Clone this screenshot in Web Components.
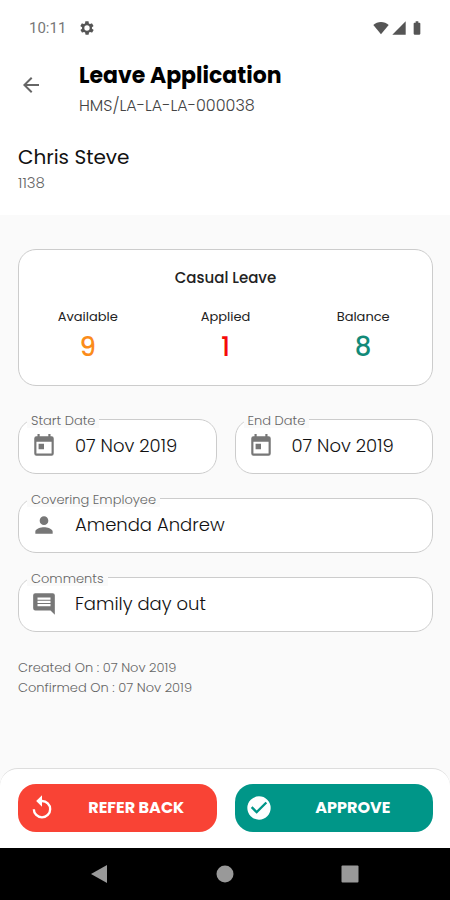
<!DOCTYPE html>
<html lang="en">
<head>
<meta charset="utf-8">
<meta name="viewport" content="width=device-width, initial-scale=1">
<title>Leave Application</title>
<style>
  html, body { margin: 0; }
  body { font-family: Poppins, Inter, "Open Sans", sans-serif; background: #fafafa; color: #111; }
</style>
</head>
<body>
<leave-app></leave-app>
<script>
const ICONS = {
  gear: '<path fill-rule="evenodd" d="M19.4 13a7.6 7.6 0 0 0 0-2l2.1-1.6c.2-.2.2-.4.1-.6l-2-3.5c-.1-.2-.4-.3-.6-.2l-2.500 1c-.5-.4-1.100-.7-1.700-1l-.4-2.600c0-.3-.2-.5-.5-.5h-4c-.3 0-.5.2-.5.5l-.4 2.600c-.6.3-1.200.6-1.700 1l-2.500-1c-.2-.1-.5 0-.6.2l-2 3.500c-.1.2-.1.5.1.600L4.600 11a7.600 7.600 0 0 0 0 2l-2.100 1.600c-.2.2-.2.4-.1.600l2 3.500c.1.2.4.3.6.2l2.500-1c.5.4 1.100.7 1.700 1l.4 2.600c0 .3.2.5.5.5h4c.3 0 .5-.2.5-.5l.4-2.600c.6-.3 1.200-.6 1.700-1l2.500 1c.2.1.5 0 .6-.2l2-3.500c.1-.2.1-.5-.1-.600zM12 16a4 4 0 1 1 0-8 4 4 0 0 1 0 8z"/>',
  wifi: '<path d="M.5 7.500C3.500 4.500 7.600 3 12 3s8.500 1.500 11.500 4.500L12 21.500z"/>',
  signal: '<path d="M2 22h20V2z"/>',
  battery: '<path d="M15.700 4H14V2h-4v2H8.300C7.600 4 7 4.600 7 5.300v15.400c0 .7.6 1.300 1.300 1.300h7.400c.7 0 1.300-.6 1.300-1.300V5.300c0-.7-.6-1.300-1.300-1.300z"/>',
  back: '<path d="M20 11H7.830l5.590-5.590L12 4l-8 8 8 8 1.410-1.410L7.830 13H20z"/>',
  event: '<path d="M19 3h-1V1h-2v2H8V1H6v2H5a2 2 0 0 0-2 2v14a2 2 0 0 0 2 2h14a2 2 0 0 0 2-2V5a2 2 0 0 0-2-2zm0 16H5V8h14zM7 10h5v5H7z"/>',
  person: '<path d="M12 12a4 4 0 1 0 0-8 4 4 0 0 0 0 8zm0 2c-2.670 0-8 1.340-8 4v2h16v-2c0-2.660-5.330-4-8-4z"/>',
  comment: '<path d="M22 4a2 2 0 0 0-2-2H4a2 2 0 0 0-2 2v12a2 2 0 0 0 2 2h14l4 4zm-4 10H6v-2h12zm0-3H6V9h12zm0-3H6V6h12z"/>',
  replay: '<path d="M12 5V1L7 6l5 5V7a6 6 0 1 1-6 6H4a8 8 0 1 0 8-8z"/>',
  check: '<path d="M12 2a10 10 0 1 0 0 20 10 10 0 0 0 0-20zm-2 15l-5-5 1.410-1.410L10 14.170l7.590-7.590L19 8z"/>',
  navback: '<path d="M3 12L19 3v18z"/>',
  home: '<circle cx="12" cy="12" r="8.500"/>',
  recent: '<rect x="3.500" y="3.500" width="17" height="17" rx="1"/>'
};

function define(name, render) {
  customElements.define(name, class extends HTMLElement {
    constructor() { super(); this.attachShadow({ mode: "open" }); }
    connectedCallback() { this.shadowRoot.innerHTML = render(this); }
  });
}
const attr = (el, name) => el.getAttribute(name) || "";

define("app-icon", el => `
  <style>
    :host { display: block; flex: none; width: var(--size, 24px); height: var(--size, 24px); }
    svg { display: block; width: 100%; height: 100%; fill: currentColor; }
  </style>
  <svg viewBox="0 0 24 24" aria-hidden="true">${ICONS[attr(el, "name")]}</svg>`);

define("status-bar", () => `
  <style>
    :host { display: flex; align-items: center; gap: 13px; height: 56px; padding: 0 25px 0 29px;
            background: #fff; color: #555; font: 15px Roboto, sans-serif; --size: 16px; }
    .time { color: #777; }
    .right { display: flex; align-items: center; gap: 2px; margin-left: auto; }
  </style>
  <span class="time">10:11</span><app-icon name="gear"></app-icon>
  <div class="right">
    <app-icon name="wifi"></app-icon><app-icon name="signal"></app-icon><app-icon name="battery"></app-icon>
  </div>`);

define("page-header", () => `
  <style>
    :host { display: block; background: #fff; padding: 4px 18px 21px; }
    .bar { display: flex; align-items: center; gap: 36px; height: 60px; }
    button { border: 0; background: none; padding: 0; margin: 0 0 10px 1px; color: #666; display: block; }
    h1 { margin: 0; font-size: 22px; line-height: 32px; font-weight: 700; color: #000; }
    .ref { font-size: 16px; line-height: 28px; color: #444; font-weight: 300; }
    ::slotted([slot=name]) { display: block; margin-top: 22px; font-size: 20px; line-height: 30px; color: #111; }
    ::slotted([slot=code]) { display: block; font-size: 15px; line-height: 22px; color: #666; font-weight: 300; }
  </style>
  <div class="bar">
    <button aria-label="Back"><app-icon name="back"></app-icon></button>
    <div><h1><slot name="title"></slot></h1><div class="ref"><slot name="ref"></slot></div></div>
  </div>
  <slot name="name"></slot><slot name="code"></slot>`);

define("leave-stat", () => `
  <style>
    :host { display: block; text-align: center; font-size: 13px; line-height: 22px; color: #222; }
    .value { font-size: 26px; line-height: 38px; font-weight: 500; color: var(--tone); }
  </style>
  <div><slot name="label"></slot></div><div class="value"><slot></slot></div>`);

define("leave-card", () => `
  <style>
    :host { display: block; background: #fff; border: 1px solid #ccc; border-radius: 18px; padding: 14px 0 19px; }
    h2 { margin: 0 0 14px; text-align: center; font-size: 15px; line-height: 28px; font-weight: 500; color: #222; }
    .stats { display: grid; grid-template-columns: repeat(3, 1fr); }
  </style>
  <h2><slot name="title"></slot></h2>
  <div class="stats"><slot></slot></div>`);

define("outlined-field", el => `
  <style>
    :host { display: block; min-width: 0; }
    fieldset { margin: 0; min-width: 0; border: 1px solid #ccc; border-radius: 18px; padding: 0 12px 9px 12px; background: #fff; }
    legend { margin-left: -4px; padding: 4px 4px 0; font-size: 13px; line-height: 14px; color: #666; font-weight: 300; background: #fafafa; }
    .row { display: flex; align-items: center; gap: 18px; height: 36px; color: #777; --size: 26px; }
    input { flex: 1; min-width: 0; width: 0; border: 0; padding: 0; background: none; outline: 0;
            font: 300 18px/26px Poppins, Inter, "Open Sans", sans-serif; color: #111; }
  </style>
  <fieldset>
    <legend><label for="value">${attr(el, "label")}</label></legend>
    <div class="row"><app-icon name="${attr(el, "icon")}"></app-icon>
      <input id="value" type="text" readonly value="${attr(el, "value")}"></div>
  </fieldset>`);

define("action-button", el => `
  <style>
    :host { display: block; min-width: 0; --size: 28px; }
    button { display: flex; align-items: center; width: 100%; height: 48px; padding: 0 0 0 10px; border: 0;
             border-radius: 18px; background: var(--fill); color: #fff;
             font: 700 16px/24px Poppins, Inter, "Open Sans", sans-serif; }
    span { flex: 1; text-align: center; }
  </style>
  <button><app-icon name="${attr(el, "icon")}"></app-icon><span><slot></slot></span></button>`);

define("action-bar", () => `
  <style>
    :host { display: grid; grid-template-columns: 1fr 1fr; gap: 18px; padding: 15px 17px 16px 18px;
            background: #fff; border: 1px solid #ddd; border-width: 1px 0 0; border-radius: 18px 18px 0 0; }
  </style><slot></slot>`);

define("system-nav", () => `
  <style>
    :host { display: flex; justify-content: center; gap: 101px; height: 52px; background: #000; color: #999; }
    button { border: 0; background: none; padding: 0; color: inherit; }
  </style>
  <button aria-label="Back"><app-icon name="navback"></app-icon></button>
  <button aria-label="Home"><app-icon name="home"></app-icon></button>
  <button aria-label="Recent apps"><app-icon name="recent"></app-icon></button>`);

define("leave-app", () => `
  <style>
    :host { display: flex; flex-direction: column; min-height: 100vh; background: #fafafa; }
    main { flex: 1; padding: 34px 17px 24px 18px; }
    .fields { display: grid; grid-template-columns: 1fr 1fr; gap: 15px 18px; margin-top: 24px; }
    .wide { grid-column: 1 / -1; }
    .log { margin-top: 26px; font-size: 13px; line-height: 20px; color: #666; font-weight: 300; }
    .log p { margin: 0; }
  </style>
  <status-bar></status-bar>
  <page-header>
    <span slot="title">Leave Application</span><span slot="ref">HMS/LA-LA-LA-000038</span>
    <span slot="name">Chris Steve</span><span slot="code">1138</span>
  </page-header>
  <main>
    <leave-card>
      <span slot="title">Casual Leave</span>
      <leave-stat style="--tone:#fb8c1a"><span slot="label">Available</span>9</leave-stat>
      <leave-stat style="--tone:#f50a0a"><span slot="label">Applied</span>1</leave-stat>
      <leave-stat style="--tone:#128a78"><span slot="label">Balance</span>8</leave-stat>
    </leave-card>
    <div class="fields">
      <outlined-field label="Start Date" icon="event" value="07 Nov 2019"></outlined-field>
      <outlined-field label="End Date" icon="event" value="07 Nov 2019"></outlined-field>
      <outlined-field class="wide" label="Covering Employee" icon="person" value="Amenda Andrew"></outlined-field>
      <outlined-field class="wide" label="Comments" icon="comment" value="Family day out"></outlined-field>
    </div>
    <div class="log"><p>Created On : 07 Nov 2019</p><p>Confirmed On : 07 Nov 2019</p></div>
  </main>
  <action-bar>
    <action-button icon="replay" style="--fill:#f94335">REFER BACK</action-button>
    <action-button icon="check" style="--fill:#009688">APPROVE</action-button>
  </action-bar>
  <system-nav></system-nav>`);
</script>
</body>
</html>
